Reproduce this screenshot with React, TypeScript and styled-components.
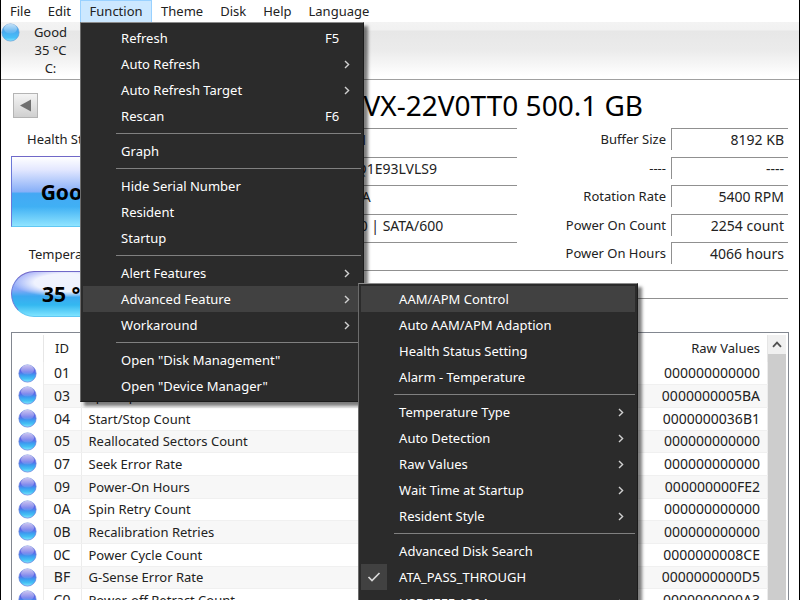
import React from "react";
import styled, { createGlobalStyle } from "styled-components";

const GlobalStyle = createGlobalStyle`
  * { box-sizing: border-box; }
  body {
    margin: 0;
    background: #fff;
    color: #222;
    font-family: "Noto Sans", "Open Sans", sans-serif;
    font-size: 13px;
    line-height: 18px;
  }
  button { font: inherit; color: inherit; border: 0; padding: 0; background: none; }
`;

const Window = styled.div`
  height: 100vh;
  overflow: hidden;
  display: flex;
  flex-direction: column;
  border: solid #000;
  border-width: 0 1px;
  background: #fff;
`;

const MenuBar = styled.nav`
  display: flex;
  gap: 1px;
  height: 22px;
  padding-left: 1px;
  flex: none;
`;

const MenuSlot = styled.div`
  position: relative;
  display: flex;
`;

const MenuTitle = styled.button<{ $open?: boolean }>`
  min-width: ${(p) => (p.$open ? "72px" : "0")};
  padding: 0 7px 2px;
  white-space: nowrap;
  border: 1px solid ${(p) => (p.$open ? "#99d1ff" : "transparent")};
  border-width: 1px 1px 0;
  background: ${(p) => (p.$open ? "#cce8ff" : "transparent")};
`;

const Popup = styled.div<{ $sub?: boolean }>`
  position: absolute;
  z-index: 2;
  top: ${(p) => (p.$sub ? "-3px" : "100%")};
  left: ${(p) => (p.$sub ? "calc(100% - 3px)" : "0")};
  width: ${(p) => (p.$sub ? "280px" : "284px")};
  padding: 2px;
  border: 1px solid;
  border-color: #8c8c8c #1c1c1c #1c1c1c #6c6c6c;
  background: #2b2b2b;
  color: #fff;
  box-shadow: 4px 4px 3px rgba(0, 0, 0, 0.5);
`;

const ItemSlot = styled.div`
  position: relative;
`;

const Item = styled.button<{ $active?: boolean }>`
  display: grid;
  grid-template-columns: 26px 1fr auto 22px;
  align-items: center;
  width: 100%;
  height: 26px;
  text-align: left;
  white-space: nowrap;
  background: ${(p) => (p.$active ? "#414141" : "transparent")};
`;

const ItemText = styled.span`
  padding-left: 12px;
`;

const CheckCell = styled.span<{ $on?: boolean }>`
  display: flex;
  align-items: center;
  justify-content: center;
  height: 26px;
  background: ${(p) => (p.$on ? "#414141" : "transparent")};
`;

const Separator = styled.hr`
  height: 1px;
  margin: 4px 0 4px 33px;
  border: 0;
  background: #808080;
`;

const DiskBar = styled.header`
  flex: none;
  display: flex;
  height: 58px;
  border-bottom: 1px solid #a0a0a0;
  background: linear-gradient(#f3f3f3 0, #f1f1f1 8px, #e7e7e7 9px, #ebebeb 28px, #fff 54px);
`;

const DiskButton = styled.button`
  display: flex;
  align-items: flex-start;
  padding: 1px 0 0;
`;

const DiskText = styled.span`
  width: 61px;
  white-space: pre-line;
  text-align: center;
`;

const TitleRow = styled.div`
  flex: none;
  display: flex;
  align-items: center;
  height: 48px;
  padding: 2px 12px 0;
`;

const PrevButton = styled.button`
  display: flex;
  align-items: center;
  justify-content: center;
  width: 25px;
  height: 25px;
  border: 1px solid #b4b4b4;
  background: linear-gradient(#f4f4f4, #d0d0d0);
`;

const Title = styled.h1`
  flex: 1;
  margin: 0;
  padding-right: 32px;
  text-align: center;
  white-space: nowrap;
  font-size: 28px;
  font-weight: 400;
  line-height: 36px;
  color: #000;
`;

const Info = styled.section`
  flex: none;
  display: grid;
  grid-template-columns: 114px 392px 1fr;
  grid-template-rows: 142px 1fr;
  height: 204px;
  padding: 0 11px 0 10px;
`;

const Status = styled.div`
  grid-row: 1 / 3;
  display: flex;
  flex-direction: column;
  text-align: center;
`;

const StatusLabel = styled.span`
  height: 28px;
  padding-top: 2px;
`;

const StatusButton = styled.button<{ $pill?: boolean }>`
  height: ${(p) => (p.$pill ? "46px" : "71px")};
  margin-bottom: ${(p) => (p.$pill ? "0" : "16px")};
  border: 1px solid;
  border-color: #7068c8 #68a8e8 #60c8f4 #6a78d8;
  border-radius: ${(p) => (p.$pill ? "23px" : "0")};
  background: ${(p) =>
    p.$pill
      ? "radial-gradient(ellipse 50% 34% at 50% 24%, rgba(255,255,255,0.85) 60%, rgba(255,255,255,0) 100%), linear-gradient(#a8b0f8 0, #88a8f8 40%, #3ca8f0 55%, #34b8f0 75%, #80e4ff 100%)"
      : "linear-gradient(#fff 0, #e4e8ff 18%, #88b0f8 50%, #44a8f4 53%, #40b0f4 72%, #90e4ff 100%)"};
  color: #000;
  font-size: 21px;
  font-weight: 700;
`;

const Fields = styled.dl<{ $right?: boolean }>`
  display: grid;
  grid-template-columns: ${(p) => (p.$right ? "1fr 117px" : "176px 1fr")};
  grid-template-rows: 29px 28px 29px 28px 28px;
  align-content: start;
  margin: 0;
  text-align: ${(p) => (p.$right ? "right" : "left")};
`;

const FieldName = styled.dt`
  padding: 2px 5px 0 0;
  text-align: right;
`;

const FieldValue = styled.dd<{ $boxed?: boolean }>`
  height: 22px;
  margin: 0;
  padding: 2px 4px 0 6px;
  font-size: 14px;
  border: solid #909090;
  border-width: ${(p) => (p.$boxed ? "1px 0 0 1px" : "1px 0 0")};
`;

const WideLines = styled.div`
  grid-column: 2 / 4;
  margin-left: 176px;
  height: 29px;
  border: solid #909090;
  border-width: 1px 0;
`;

const Panel = styled.section`
  flex: 1;
  min-height: 0;
  display: flex;
  margin: 0 10px;
  padding: 2px 2px 0;
  border: 1px solid #828790;
  border-bottom: 0;
  overflow: hidden;
`;

const Table = styled.table`
  flex: 1;
  align-self: flex-start;
  border-collapse: collapse;
  table-layout: fixed;
  width: 100%;
`;

const Head = styled.th<{ $w?: number; $align?: "center" | "right" }>`
  width: ${(p) => (p.$w ? p.$w + "px" : "auto")};
  height: 27px;
  padding: 0 7px 2px;
  border-right: 1px solid #e6e6e6;
  font-weight: 400;
  text-align: ${(p) => p.$align || "left"};
`;

const Row = styled.tr`
  height: 23px;
  &:nth-child(3n + 1) { height: 22px; }
  &:nth-child(even) { background: #f7f7f7; }
`;

const Cell = styled.td<{ $align?: "center" | "right"; $icon?: boolean }>`
  padding: ${(p) => (p.$icon ? "0 0 0 4px" : p.$align === "center" ? "0" : "0 7px")};
  border-right: 1px solid #ececec;
  border-bottom: ${(p) => (p.$icon ? "0" : "1px solid #f0f0f0")};
  background: ${(p) => (p.$icon ? "#fff" : "transparent")};
  text-align: ${(p) => p.$align || "left"};
  font-size: ${(p) => (p.$align ? "14px" : "13px")};
  line-height: 18px;
  white-space: nowrap;
`;

const Scroll = styled.div`
  flex: none;
  width: 18px;
  display: flex;
  flex-direction: column;
  background: #cdcdcd;
`;

const ScrollUp = styled.button`
  display: flex;
  align-items: center;
  justify-content: center;
  height: 19px;
  background: #f0f0f0;
`;

const BallSvg = styled.svg`
  display: block;
  flex: none;
`;

const Ball = ({ light }: { light?: boolean }) => {
  const id = light ? "ball-light" : "ball-deep";
  return (
    <BallSvg width="19" height="19" viewBox="0 0 19 19" aria-hidden="true">
      <defs>
        <linearGradient id={id} x1="0" y1="0" x2="0" y2="1">
          <stop offset="0" stopColor={light ? "#62b4ee" : "#7c68dc"} />
          <stop offset="0.4" stopColor={light ? "#4aa8ee" : "#5a68e8"} />
          <stop offset="0.6" stopColor={light ? "#48b4f4" : "#3c9cf0"} />
          <stop offset="0.8" stopColor={light ? "#48c0f8" : "#44c0f4"} />
          <stop offset="1" stopColor="#84e4fc" />
        </linearGradient>
        <linearGradient id={id + "-shine"} x1="0" y1="0" x2="0" y2="1">
          <stop offset="0" stopColor="#fff" stopOpacity="0.6" />
          <stop offset="1" stopColor="#fff" stopOpacity="0.08" />
        </linearGradient>
      </defs>
      <circle cx="9.5" cy="9.5" r="8.6" fill={`url(#${id})`} stroke={light ? "#5c9cd8" : "#5c78dc"} strokeWidth="0.7" />
      <ellipse cx="9.5" cy="5.8" rx="6.6" ry="4.8" fill={`url(#${id}-shine)`} />
    </BallSvg>
  );
};

const ChevronSvg = styled.svg`
  margin-left: 5px;
`;

const Chevron = () => (
  <ChevronSvg width="6" height="9" viewBox="0 0 6 9" fill="none" stroke="#d0d0d0" strokeWidth="1.4" aria-hidden="true">
    <path d="M1 1 L4.6 4.5 L1 8" />
  </ChevronSvg>
);

type Entry = { label: string; keys?: string; sub?: boolean; checked?: boolean; active?: boolean; children?: Entry[] } | null;

const advanced: Entry[] = [
  { label: "AAM/APM Control", active: true },
  { label: "Auto AAM/APM Adaption" },
  { label: "Health Status Setting" },
  { label: "Alarm - Temperature" },
  null,
  { label: "Temperature Type", sub: true },
  { label: "Auto Detection", sub: true },
  { label: "Raw Values", sub: true },
  { label: "Wait Time at Startup", sub: true },
  { label: "Resident Style", sub: true },
  null,
  { label: "Advanced Disk Search" },
  { label: "ATA_PASS_THROUGH", checked: true },
  { label: "USB/IEEE 1394", sub: true },
];

const functionMenu: Entry[] = [
  { label: "Refresh", keys: "F5" },
  { label: "Auto Refresh", sub: true },
  { label: "Auto Refresh Target", sub: true },
  { label: "Rescan", keys: "F6" },
  null,
  { label: "Graph" },
  null,
  { label: "Hide Serial Number" },
  { label: "Resident" },
  { label: "Startup" },
  null,
  { label: "Alert Features", sub: true },
  { label: "Advanced Feature", sub: true, active: true, children: advanced },
  { label: "Workaround", sub: true },
  null,
  { label: 'Open "Disk Management"' },
  { label: 'Open "Device Manager"' },
];

const Menu = ({ entries, nested }: { entries: Entry[]; nested?: boolean }) => (
  <Popup $sub={nested} role="menu">
    {entries.map((e, i) =>
      e === null ? (
        <Separator key={i} />
      ) : (
        <ItemSlot key={i}>
          <Item role="menuitem" $active={e.active}>
            <CheckCell $on={e.checked}>
              {e.checked && (
                <svg width="14" height="12" viewBox="0 0 14 12" fill="none" stroke="#d8d8d8" strokeWidth="1.7" aria-hidden="true">
                  <path d="M1.5 6 L5 9.5 L12.5 2" />
                </svg>
              )}
            </CheckCell>
            <ItemText>{e.label}</ItemText>
            <span>{e.keys}</span>
            {e.sub && <Chevron />}
          </Item>
          {e.children && <Menu entries={e.children} nested />}
        </ItemSlot>
      )
    )}
  </Popup>
);

const titles = ["File", "Edit", "Function", "Theme", "Disk", "Help", "Language"];

const driveFields = [
  ["Firmware", "01.01A01"],
  ["Serial Number", "WD-WXQ1E93LVLS9"],
  ["Interface", "Serial ATA"],
  ["Transfer Mode", "SATA/300 | SATA/600"],
  ["Drive Letter", "C:"],
];

const usageFields = [
  ["Buffer Size", "8192 KB"],
  ["----", "----"],
  ["Rotation Rate", "5400 RPM"],
  ["Power On Count", "2254 count"],
  ["Power On Hours", "4066 hours"],
];

const attributes = [
  ["01", "Read Error Rate", "000000000000"],
  ["03", "Spin-Up Time", "0000000005BA"],
  ["04", "Start/Stop Count", "0000000036B1"],
  ["05", "Reallocated Sectors Count", "000000000000"],
  ["07", "Seek Error Rate", "000000000000"],
  ["09", "Power-On Hours", "000000000FE2"],
  ["0A", "Spin Retry Count", "000000000000"],
  ["0B", "Recalibration Retries", "000000000000"],
  ["0C", "Power Cycle Count", "0000000008CE"],
  ["BF", "G-Sense Error Rate", "0000000000D5"],
  ["C0", "Power-off Retract Count", "0000000000A3"],
];

export default function App() {
  return (
    <>
      <GlobalStyle />
      <Window>
        <MenuBar>
          {titles.map((t) => (
            <MenuSlot key={t}>
              <MenuTitle $open={t === "Function"}>{t}</MenuTitle>
              {t === "Function" && <Menu entries={functionMenu} />}
            </MenuSlot>
          ))}
        </MenuBar>
        <DiskBar>
          <DiskButton>
            <Ball light />
            <DiskText>{"Good\n35 °C\nC:"}</DiskText>
          </DiskButton>
        </DiskBar>
        <TitleRow>
          <PrevButton aria-label="Previous disk">
            <svg width="13" height="13" viewBox="0 0 13 13" aria-hidden="true">
              <path d="M1 6.5 L12 0.5 V12.5 Z" fill="#707070" />
            </svg>
          </PrevButton>
          <Title>WDC WD5000LPVX-22V0TT0 500.1 GB</Title>
        </TitleRow>
        <Info>
          <Status>
            <StatusLabel>Health Status</StatusLabel>
            <StatusButton>Good</StatusButton>
            <StatusLabel>Temperature</StatusLabel>
            <StatusButton $pill>35 °C</StatusButton>
          </Status>
          <Fields>
            {driveFields.map(([n, v]) => (
              <React.Fragment key={n}>
                <FieldName>{n}</FieldName>
                <FieldValue>{v}</FieldValue>
              </React.Fragment>
            ))}
          </Fields>
          <Fields $right>
            {usageFields.map(([n, v]) => (
              <React.Fragment key={n}>
                <FieldName>{n}</FieldName>
                <FieldValue $boxed>{v}</FieldValue>
              </React.Fragment>
            ))}
          </Fields>
          <WideLines />
        </Info>
        <Panel>
          <Table>
            <thead>
              <tr>
                <Head $w={29} />
                <Head $w={38} $align="center">ID</Head>
                <Head>Attribute Name</Head>
                <Head $align="right">Raw Values</Head>
              </tr>
            </thead>
            <tbody>
              {attributes.map(([id, name, raw]) => (
                <Row key={id}>
                  <Cell $icon>
                    <Ball />
                  </Cell>
                  <Cell $align="center">{id}</Cell>
                  <Cell>{name}</Cell>
                  <Cell $align="right">{raw}</Cell>
                </Row>
              ))}
            </tbody>
          </Table>
          <Scroll>
            <ScrollUp aria-label="Scroll up">
              <svg width="10" height="7" viewBox="0 0 10 7" fill="none" stroke="#505050" strokeWidth="1.8" aria-hidden="true">
                <path d="M1 5.8 L5 1.6 L9 5.8" />
              </svg>
            </ScrollUp>
          </Scroll>
        </Panel>
      </Window>
    </>
  );
}
